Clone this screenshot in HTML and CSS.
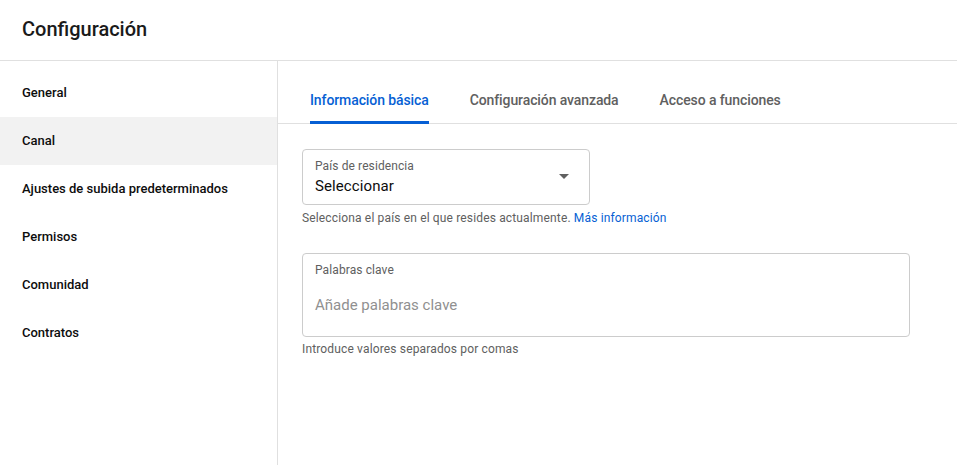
FILE: index.html
```html
<!DOCTYPE html>
<html lang="es">
<head>
<meta charset="utf-8">
<title>Configuración</title>
<link rel="stylesheet" href="styles.css">
</head>
<body>
<div class="dialog">
  <header class="header"><h1 class="title">Configuración</h1></header>
  <div class="main">
    <nav class="sidebar">
      <div class="nav-item">General</div>
      <div class="nav-item active">Canal</div>
      <div class="nav-item">Ajustes de subida predeterminados</div>
      <div class="nav-item">Permisos</div>
      <div class="nav-item">Comunidad</div>
      <div class="nav-item">Contratos</div>
    </nav>
    <section class="content">
      <div class="tabs">
        <div class="tab selected">Información básica</div>
        <div class="tab">Configuración avanzada</div>
        <div class="tab">Acceso a funciones</div>
      </div>
      <div class="form">
        <div class="field">
          <div class="select">
            <div class="select-text">
              <div class="label">País de residencia</div>
              <div class="value">Seleccionar</div>
            </div>
            <svg class="arrow" width="24" height="24" viewBox="0 0 24 24"><path d="M7 10l5 5 5-5z" fill="#606060"/></svg>
          </div>
          <div class="helper">Selecciona el país en el que resides actualmente. <a class="link" href="#">Más información</a></div>
        </div>
        <div class="field">
          <div class="textarea">
            <div class="label">Palabras clave</div>
            <div class="placeholder">Añade palabras clave</div>
          </div>
          <div class="helper">Introduce valores separados por comas</div>
        </div>
      </div>
    </section>
  </div>
</div>
</body>
</html>
```
FILE: styles.css
```css
* { box-sizing: border-box; }
html, body { margin: 0; padding: 0; background: #fff; }
body { font-family: Roboto, "Noto Sans", Arial, sans-serif; color: #0d0d0d; }
.dialog { width: 957px; height: 465px; display: flex; flex-direction: column; overflow: hidden; }
.header { height: 61px; border-bottom: 1px solid #e0e0e0; display: flex; align-items: center; padding-left: 22px; flex-shrink: 0; }
.title { margin: 0; font-size: 20px; font-weight: 500; color: #1a1a1a; letter-spacing: 0; padding-bottom: 2px; }
.main { flex: 1; display: flex; }
.sidebar { width: 278px; border-right: 1px solid #e0e0e0; padding-top: 8px; flex-shrink: 0; }
.nav-item { height: 48px; display: flex; align-items: center; padding-left: 22px; padding-bottom: 2px; font-size: 13px; font-weight: 500; color: #0d0d0d; }
.nav-item.active { background: #f2f2f2; }
.content { flex: 1; }
.tabs { display: flex; gap: 41px; padding-left: 32px; border-bottom: 1px solid #e0e0e0; height: 63px; }
.tab { height: 63px; display: flex; align-items: center; padding-top: 18px; font-size: 14px; font-weight: 500; color: #606060; letter-spacing: -0.1px; border-bottom: 3px solid transparent; margin-bottom: -1px; }
.tab.selected { color: #065fd4; border-bottom-color: #065fd4; }
.form { padding: 25px 0 0 24px; display: flex; flex-direction: column; gap: 27px; }
.field { display: flex; flex-direction: column; }
.select { width: 288px; height: 56px; border: 1px solid #ccc; border-radius: 4px; display: flex; align-items: center; justify-content: space-between; padding: 0 13px 0 12px; }
.select-text { display: flex; flex-direction: column; }
.label { font-size: 12px; color: #606060; line-height: 16px; letter-spacing: 0.1px; }
.value { font-size: 15px; color: #0d0d0d; line-height: 20px; margin-top: 2px; letter-spacing: 0.1px; }
.arrow { display: block; margin-top: -2px; }
.helper { font-size: 12px; color: #606060; margin-top: 5px; line-height: 16px; letter-spacing: 0.15px; }
.link { color: #065fd4; text-decoration: none; }
.textarea { width: 608px; height: 84px; border: 1px solid #ccc; border-radius: 4px; padding: 8px 12px; display: flex; flex-direction: column; }
.textarea + .helper { margin-top: 4px; }
.placeholder { font-size: 15px; color: #909090; margin-top: 17px; line-height: 20px; }
```
